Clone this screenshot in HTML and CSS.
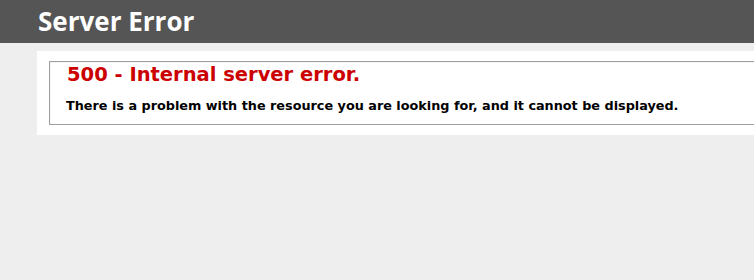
FILE: index.html
```html
<!DOCTYPE html>
<html>
<head>
<meta charset="utf-8">
<title>500 - Internal server error.</title>
<link rel="stylesheet" href="styles.css">
</head>
<body>
<div class="header"><h1>Server Error</h1></div>
<div class="content">
  <div class="content-container">
    <fieldset class="box">
      <h2>500 - Internal server error.</h2>
      <h3>There is a problem with the resource you are looking for, and it cannot be displayed.</h3>
    </fieldset>
  </div>
</div>
</body>
</html>
```

FILE: styles.css
```css
html, body {
  overflow: hidden;
}
body {
  margin: 0;
  background: #eeeeee;
  font-family: "DejaVu Sans", Verdana, sans-serif;
  font-size: 11.2px;
}
.header {
  background: #555555;
  color: #ffffff;
  padding: 6px 0 6px 38px;
  font-family: "Open Sans", "Trebuchet MS", sans-serif;
}
.header h1 {
  margin: 0;
  font-size: 26px;
  line-height: 31px;
  font-weight: 700;
}
.content {
  margin-left: 37px;
  overflow: hidden;
}
.content-container {
  background: #ffffff;
  width: 800px;
  margin-top: 8px;
  padding: 10px;
}
.box {
  margin: 0 2px;
  padding: 0 15px 10px 16px;
  border: 1px solid #a0a0a0;
  box-shadow: inset 1px 1px 0 #f4f4f4;
}
.box h2 {
  margin: 0;
  padding-left: 1px;
  font-size: 19.5px;
  line-height: 26px;
  color: #cc0000;
}
.box h3 {
  margin: 10px 0 0 0;
  font-size: 12.8px;
  line-height: 16px;
  color: #000000;
}
```
